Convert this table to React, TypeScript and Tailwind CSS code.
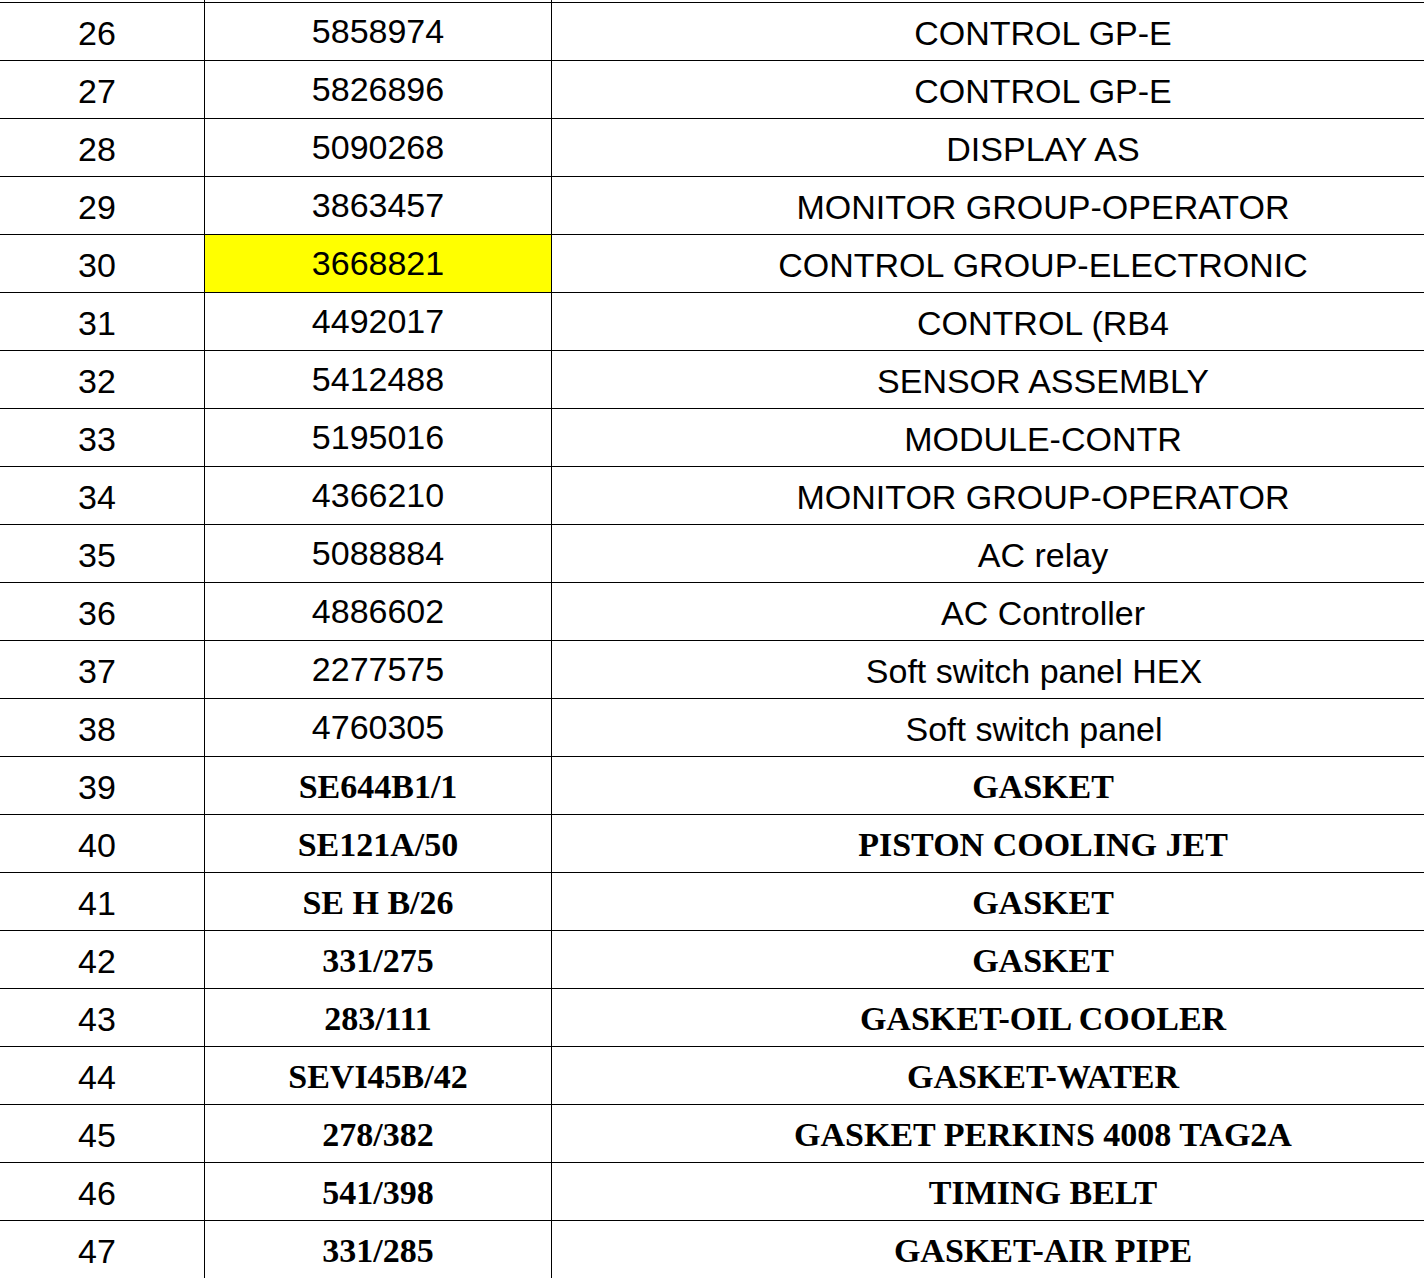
import React from 'react';

interface PartRow {
  no: number;
  code: string;
  name: string;
  bold?: boolean;
  highlight?: boolean;
  trailing?: boolean;
}

const rows: PartRow[] = [
  { no: 26, code: '5858974', name: 'CONTROL GP-E' },
  { no: 27, code: '5826896', name: 'CONTROL GP-E' },
  { no: 28, code: '5090268', name: 'DISPLAY AS' },
  { no: 29, code: '3863457', name: 'MONITOR GROUP-OPERATOR' },
  { no: 30, code: '3668821', name: 'CONTROL GROUP-ELECTRONIC', highlight: true },
  { no: 31, code: '4492017', name: 'CONTROL (RB4' },
  { no: 32, code: '5412488', name: 'SENSOR ASSEMBLY' },
  { no: 33, code: '5195016', name: 'MODULE-CONTR' },
  { no: 34, code: '4366210', name: 'MONITOR GROUP-OPERATOR' },
  { no: 35, code: '5088884', name: 'AC relay' },
  { no: 36, code: '4886602', name: 'AC Controller' },
  // these two have trailing spaces in the sheet, so they sit a bit left
  { no: 37, code: '2277575', name: 'Soft switch panel HEX', trailing: true },
  { no: 38, code: '4760305', name: 'Soft switch panel', trailing: true },
  { no: 39, code: 'SE644B1/1', name: 'GASKET', bold: true },
  { no: 40, code: 'SE121A/50', name: 'PISTON COOLING JET', bold: true },
  { no: 41, code: 'SE H B/26', name: 'GASKET', bold: true },
  { no: 42, code: '331/275', name: 'GASKET', bold: true },
  { no: 43, code: '283/111', name: 'GASKET-OIL COOLER', bold: true },
  { no: 44, code: 'SEVI45B/42', name: 'GASKET-WATER', bold: true },
  { no: 45, code: '278/382', name: 'GASKET PERKINS 4008 TAG2A', bold: true },
  { no: 46, code: '541/398', name: 'TIMING BELT', bold: true },
  { no: 47, code: '331/285', name: 'GASKET-AIR PIPE', bold: true },
];

const sans = "font-['Liberation_Sans',Arial,sans-serif]";
const serif = "font-['Liberation_Serif','Times_New_Roman',serif] font-bold";

const App = () => {
  return (
    <div className="w-[1424px] h-[1278px] overflow-hidden bg-white text-black">
      {/* tail of the row above, cut off by the screenshot */}
      <div className="flex h-[2px]">
        <div className="w-[205px] shrink-0 border-r border-black" />
        <div className="w-[347px] shrink-0 border-r border-black" />
        <div className="w-[982px] shrink-0" />
      </div>

      {rows.map((row) => (
        <div key={row.no} className="flex h-[58px] border-t border-black">
          <div className={`w-[205px] shrink-0 border-r border-black flex items-center justify-center pr-[10px] pt-[3px] text-[34px] ${sans}`}>
            {row.no}
          </div>
          <div
            className={`w-[347px] shrink-0 border-r border-black flex items-center justify-center text-[34px] ${
              row.bold ? `${serif} pt-[2px]` : `${sans} pb-[1px]`
            } ${row.highlight ? 'bg-[#ffff00]' : ''}`}
          >
            {row.code}
          </div>
          <div
            className={`w-[982px] shrink-0 flex items-center justify-center whitespace-nowrap text-[34px] ${
              row.bold ? `${serif} pt-[2px]` : `${sans} pt-[3px]`
            } ${row.trailing ? 'pr-[18px]' : ''}`}
          >
            {row.name}
          </div>
        </div>
      ))}
    </div>
  );
};

export default App;
